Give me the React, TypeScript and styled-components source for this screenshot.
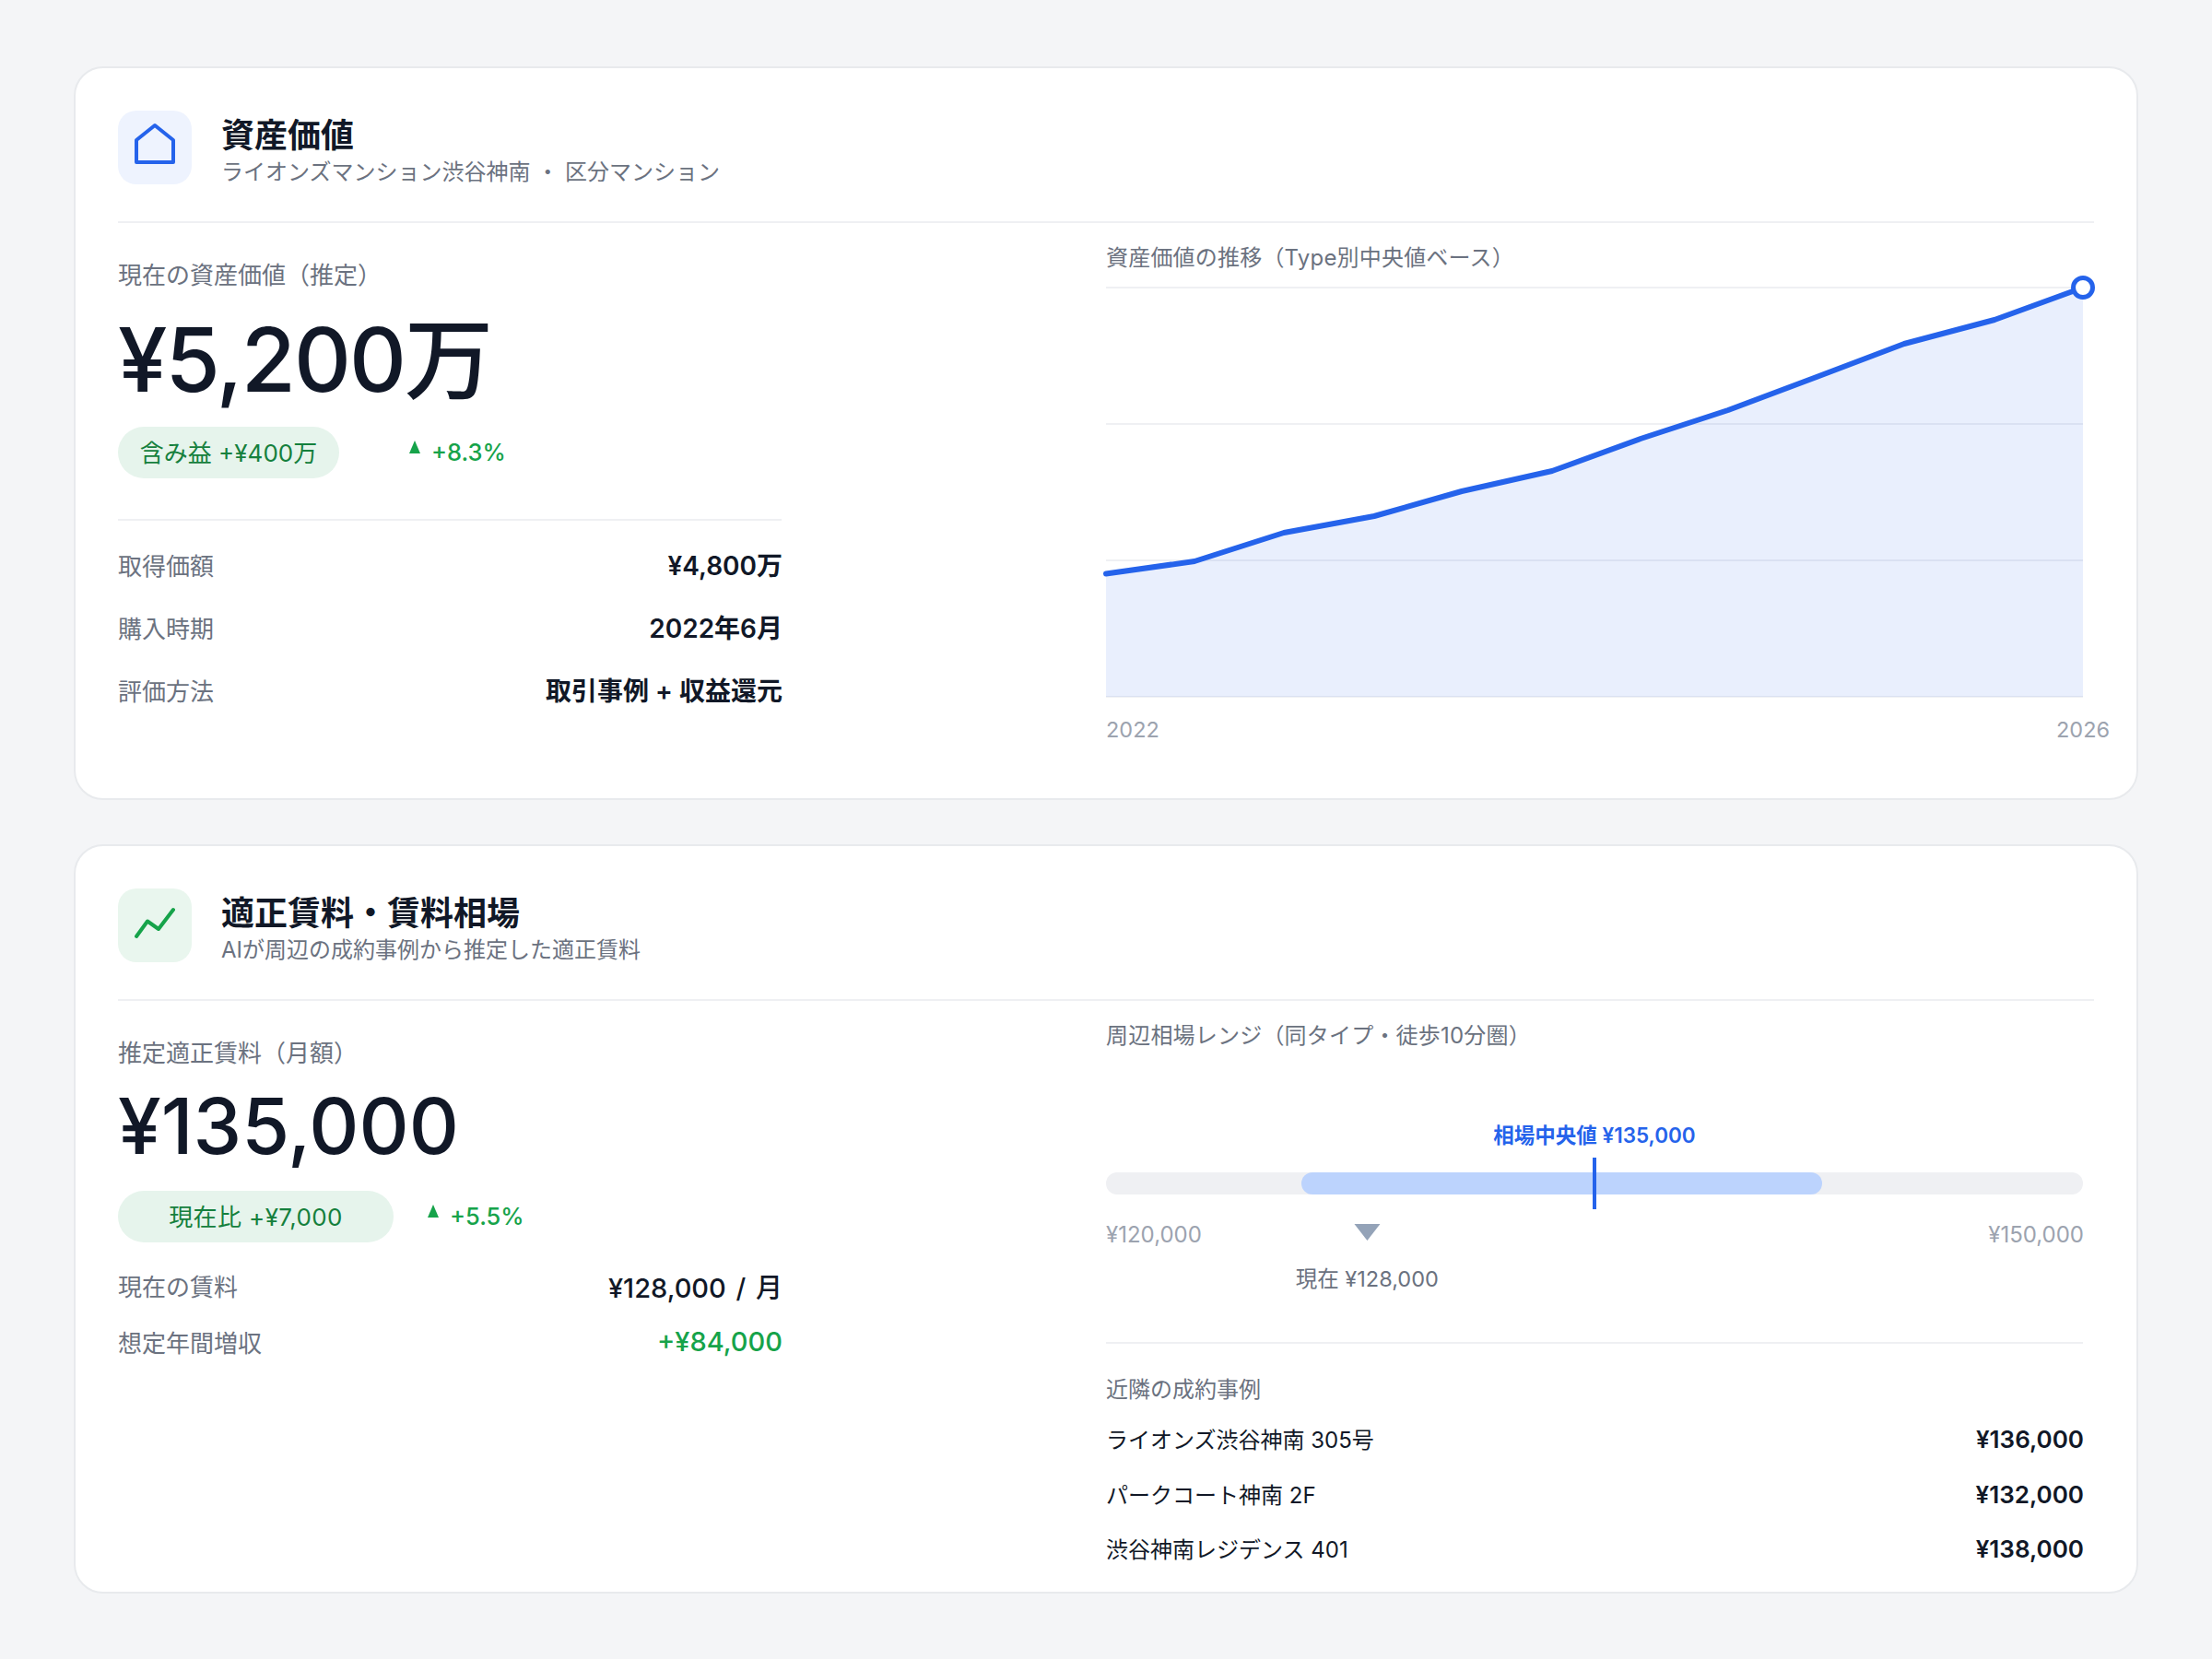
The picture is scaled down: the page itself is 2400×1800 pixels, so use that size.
import styled, { createGlobalStyle } from 'styled-components';

const GlobalStyle = createGlobalStyle`
    html, body {
        margin: 0;
        padding: 0;
        background: #f4f5f7;
    }
    body {
        font-family: Inter, 'Noto Sans CJK JP', sans-serif;
        color: #111827;
    }
    * {
        box-sizing: border-box;
    }
`;

const chartPoints = [
    [0, 325.5],
    [96, 312],
    [193, 281],
    [291, 263],
    [386, 236],
    [484, 214],
    [580, 179],
    [675, 148],
    [771, 112],
    [866, 76],
    [964, 50],
    [1060, 15],
];
const linePath = chartPoints.map(([x, y]) => `${x},${y}`).join(' ');
const areaPath = `0,459 ${linePath} 1060,459`;

const App = () => {
    return (
        <>
            <GlobalStyle />
            <Page>
                <Card>
                    <CardHeader>
                        <IconBox $bg="#eef3fe">
                            <svg width="56" height="56" viewBox="0 0 56 56" fill="none">
                                <path
                                    d="M28 4 L48 20 V44 H8 V20 Z"
                                    stroke="#2563eb"
                                    strokeWidth="4"
                                    strokeLinejoin="round"
                                />
                            </svg>
                        </IconBox>
                        <HeaderText>
                            <Title>資産価値</Title>
                            <Subtitle>ライオンズマンション渋谷神南 ・ 区分マンション</Subtitle>
                        </HeaderText>
                    </CardHeader>
                    <CardBody>
                        <LeftCol>
                            <KpiLabel>現在の資産価値（推定）</KpiLabel>
                            <BigValue $size={96} $height={120} $top={13} $spacing={-0.02}>
                                ¥5,200万
                            </BigValue>
                            <PillRow $top={13}>
                                <Pill $width={240}>含み益 +¥400万</Pill>
                                <Delta $gap={76}>
                                    <UpTriangle />
                                    +8.3%
                                </Delta>
                            </PillRow>
                            <LeftDivider />
                            <FactRow $height={68}>
                                <FactLabel>取得価額</FactLabel>
                                <FactValue>¥4,800万</FactValue>
                            </FactRow>
                            <FactRow $height={68}>
                                <FactLabel>購入時期</FactLabel>
                                <FactValue>2022年6月</FactValue>
                            </FactRow>
                            <FactRow $height={68}>
                                <FactLabel>評価方法</FactLabel>
                                <FactValue>取引事例 + 収益還元</FactValue>
                            </FactRow>
                        </LeftCol>
                        <RightCol>
                            <SectionLabel>資産価値の推移（Type別中央値ベース）</SectionLabel>
                            <ChartSvg width="1060" height="555" viewBox="0 0 1060 555">
                                {[15, 163, 311, 459].map((y) => (
                                    <line key={y} x1="0" x2="1060" y1={y} y2={y} stroke="#eff0f3" strokeWidth="2" />
                                ))}
                                <polygon points={areaPath} fill="#2563eb" fillOpacity="0.1" />
                                <polyline
                                    points={linePath}
                                    fill="none"
                                    stroke="#2563eb"
                                    strokeWidth="6"
                                    strokeLinejoin="round"
                                    strokeLinecap="round"
                                />
                                <circle cx="1060" cy="15" r="10.5" fill="#fff" stroke="#2563eb" strokeWidth="5" />
                                <AxisText x="0" y="503">
                                    2022
                                </AxisText>
                                <AxisText x="1060" y="503" textAnchor="middle">
                                    2026
                                </AxisText>
                            </ChartSvg>
                        </RightCol>
                    </CardBody>
                </Card>

                <Card>
                    <CardHeader>
                        <IconBox $bg="#e9f6ee">
                            <svg width="56" height="56" viewBox="0 0 56 56" fill="none">
                                <path
                                    d="M8 40 L20 23.5 L32 32 L48 11"
                                    stroke="#16a34a"
                                    strokeWidth="4"
                                    strokeLinecap="round"
                                    strokeLinejoin="round"
                                />
                            </svg>
                        </IconBox>
                        <HeaderText>
                            <Title>適正賃料・賃料相場</Title>
                            <Subtitle>AIが周辺の成約事例から推定した適正賃料</Subtitle>
                        </HeaderText>
                    </CardHeader>
                    <CardBody>
                        <LeftCol>
                            <KpiLabel>推定適正賃料（月額）</KpiLabel>
                            <BigValue $size={84} $height={104} $top={9} $spacing={0}>
                                ¥135,000
                            </BigValue>
                            <PillRow $top={18}>
                                <Pill $width={299} $spacing={0.4}>
                                    現在比 +¥7,000
                                </Pill>
                                <Delta $gap={37}>
                                    <UpTriangle />
                                    +5.5%
                                </Delta>
                            </PillRow>
                            <FactList>
                                <FactRow $height={61}>
                                    <FactLabel>現在の賃料</FactLabel>
                                    <RentValue>¥128,000 / 月</RentValue>
                                </FactRow>
                                <FactRow $height={61}>
                                    <FactLabel>想定年間増収</FactLabel>
                                    <RentValue $green>+¥84,000</RentValue>
                                </FactRow>
                            </FactList>
                        </LeftCol>
                        <RightCol>
                            <SectionLabel>周辺相場レンジ（同タイプ・徒歩10分圏）</SectionLabel>
                            <RangeInner>
                                <MedianLabel>相場中央値 ¥135,000</MedianLabel>
                                <Track>
                                    <TrackFill />
                                    <MedianTick />
                                </Track>
                                <Ticks>
                                    <span>¥120,000</span>
                                    <CurrentMark $pct={26.7}>
                                        <DownTriangle />
                                        <CurrentLabel>現在 ¥128,000</CurrentLabel>
                                    </CurrentMark>
                                    <span>¥150,000</span>
                                </Ticks>
                                <RangeDivider />
                                <CasesTitle>近隣の成約事例</CasesTitle>
                                <CaseList>
                                    <CaseRow>
                                        <CaseName>ライオンズ渋谷神南 305号</CaseName>
                                        <CasePrice>¥136,000</CasePrice>
                                    </CaseRow>
                                    <CaseRow>
                                        <CaseName>パークコート神南 2F</CaseName>
                                        <CasePrice>¥132,000</CasePrice>
                                    </CaseRow>
                                    <CaseRow>
                                        <CaseName>渋谷神南レジデンス 401</CaseName>
                                        <CasePrice>¥138,000</CasePrice>
                                    </CaseRow>
                                </CaseList>
                            </RangeInner>
                        </RightCol>
                    </CardBody>
                </Card>
            </Page>
        </>
    );
};

const Page = styled.div`
    width: 2400px;
    min-height: 1800px;
    padding: 72px 80px;
    display: flex;
    flex-direction: column;
    gap: 48px;
    background: #f4f5f7;
`;

const Card = styled.section`
    background: #fff;
    border: 2px solid #e8eaed;
    border-radius: 32px;
    padding: 46px 46px 14px;
`;

const CardHeader = styled.header`
    display: flex;
    align-items: flex-start;
    gap: 32px;
    padding-bottom: 40px;
    border-bottom: 2px solid #eff0f3;
`;

const IconBox = styled.div<{ $bg: string }>`
    width: 80px;
    height: 80px;
    flex: none;
    display: flex;
    align-items: center;
    justify-content: center;
    border-radius: 20px;
    background: ${(props) => props.$bg};
`;

const HeaderText = styled.div`
    height: 80px;
    padding-top: 5px;
`;

const Title = styled.h2`
    margin: 0;
    font-size: 36px;
    line-height: 44px;
    font-weight: 700;
    color: #111827;
`;

const Subtitle = styled.p`
    margin: 0;
    font-size: 24px;
    line-height: 36px;
    color: #6b7280;
`;

const CardBody = styled.div`
    display: grid;
    grid-template-columns: 1072px 1fr;
`;

const LeftCol = styled.div`
    width: 720px;
    padding-top: 39px;
`;

const RightCol = styled.div`
    padding: 20px 12px 0 0;
`;

const KpiLabel = styled.div`
    font-size: 26px;
    line-height: 36px;
    color: #6b7280;
`;

const BigValue = styled.div<{ $size: number; $height: number; $top: number; $spacing: number }>`
    margin-top: ${(props) => props.$top}px;
    font-size: ${(props) => props.$size}px;
    line-height: ${(props) => props.$height}px;
    letter-spacing: ${(props) => props.$spacing}em;
    font-weight: 500;
    color: #111827;
`;

const PillRow = styled.div<{ $top: number }>`
    display: flex;
    align-items: center;
    margin-top: ${(props) => props.$top}px;
`;

const Pill = styled.div<{ $width: number; $spacing?: number }>`
    width: ${(props) => props.$width}px;
    height: 56px;
    padding-bottom: 3px;
    border-radius: 28px;
    display: flex;
    align-items: center;
    justify-content: center;
    background: #e6f4ec;
    color: #15803d;
    font-size: 26px;
    letter-spacing: ${(props) => props.$spacing ?? 0}px;
`;

const Delta = styled.div<{ $gap: number }>`
    display: flex;
    align-items: center;
    gap: 12px;
    margin-left: ${(props) => props.$gap}px;
    margin-bottom: 2px;
    font-size: 25.5px;
    font-weight: 500;
    color: #16a34a;
`;

const UpTriangle = styled.span`
    width: 0;
    height: 0;
    margin-bottom: 10px;
    border-left: 6px solid transparent;
    border-right: 6px solid transparent;
    border-bottom: 14px solid #16a34a;
`;

const LeftDivider = styled.div`
    height: 2px;
    margin: 44px 0 13px;
    background: #eff0f3;
`;

const FactList = styled.div`
    margin-top: 16px;
`;

const FactRow = styled.div<{ $height: number }>`
    height: ${(props) => props.$height}px;
    display: flex;
    align-items: center;
    justify-content: space-between;
`;

const FactLabel = styled.span`
    font-size: 26px;
    color: #6b7280;
`;

const FactValue = styled.span`
    margin-right: -1px;
    font-size: 28px;
    font-weight: 600;
    color: #111827;
`;

const RentValue = styled.span<{ $green?: boolean }>`
    margin-right: -1px;
    font-size: 29px;
    font-weight: 500;
    word-spacing: 3px;
    color: ${(props) => (props.$green ? '#16a34a' : '#111827')};
`;

const SectionLabel = styled.div`
    font-size: 24px;
    line-height: 36px;
    letter-spacing: 0.2px;
    color: #6b7280;
`;

const ChartSvg = styled.svg`
    display: block;
    overflow: visible;
    margin-top: -1px;
`;

const AxisText = styled.text`
    font-family: Inter, sans-serif;
    font-size: 23.5px;
    fill: #9ca3af;
`;

const RangeInner = styled.div`
    padding-top: 74px;
`;

const MedianLabel = styled.div`
    font-size: 22.5px;
    line-height: 32px;
    font-weight: 600;
    text-align: center;
    color: #2563eb;
`;

const Track = styled.div`
    position: relative;
    height: 24px;
    margin-top: 24px;
    border-radius: 12px;
    background: #eff0f3;
`;

const TrackFill = styled.div`
    position: absolute;
    left: 20%;
    right: 26.7%;
    top: 0;
    bottom: 0;
    border-radius: 12px;
    background: #bcd3fd;
`;

const MedianTick = styled.div`
    position: absolute;
    left: 50%;
    top: -16px;
    bottom: -16px;
    width: 4px;
    margin-left: -2px;
    background: #2563eb;
`;

const Ticks = styled.div`
    position: relative;
    display: flex;
    justify-content: space-between;
    margin-top: 28px;
    margin-right: -1px;
    font-size: 24px;
    line-height: 32px;
    color: #9ca3af;
`;

const CurrentMark = styled.div<{ $pct: number }>`
    position: absolute;
    top: 4px;
    left: ${(props) => props.$pct}%;
    transform: translateX(-50%);
    display: flex;
    flex-direction: column;
    align-items: center;
`;

const DownTriangle = styled.span`
    width: 0;
    height: 0;
    border-left: 14px solid transparent;
    border-right: 14px solid transparent;
    border-top: 18px solid #94a3b8;
`;

const CurrentLabel = styled.span`
    margin-top: 26px;
    font-size: 23.5px;
    color: #6b7280;
    white-space: nowrap;
`;

const RangeDivider = styled.div`
    height: 2px;
    margin-top: 100px;
    background: #eff0f3;
`;

const CasesTitle = styled.div`
    margin-top: 34px;
    font-size: 24px;
    line-height: 32px;
    color: #6b7280;
`;

const CaseList = styled.div`
    margin: 8px 0 2px;
`;

const CaseRow = styled.div`
    height: 59.5px;
    display: flex;
    align-items: center;
    justify-content: space-between;
`;

const CaseName = styled.span`
    padding-bottom: 2px;
    font-size: 24px;
    color: #111827;
`;

const CasePrice = styled.span`
    margin-right: -1px;
    font-size: 26px;
    font-weight: 600;
    color: #111827;
`;

export default App;
